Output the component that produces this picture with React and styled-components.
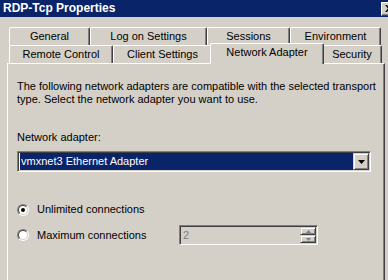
import React from 'react';
import styled, { createGlobalStyle } from 'styled-components';

const Global = createGlobalStyle`
  html, body { margin: 0; padding: 0; background: #D4D0C8; overflow: hidden; }
  body { font-family: "Liberation Sans", Arial, sans-serif; font-size: 11px; color: #000; }
`;

const Window = styled.div`
  width: 400px;
  height: 280px;
  background: #D4D0C8;
  display: flex;
  flex-direction: column;
  overflow: hidden;
`;

const TitleBar = styled.div`
  height: 17px;
  flex-shrink: 0;
  background: #0A246A;
  display: flex;
  align-items: center;
  justify-content: space-between;
  padding-left: 3px;
`;

const Title = styled.span`
  color: #fff;
  font-weight: bold;
  font-size: 12px;
  line-height: 17px;
  white-space: nowrap;
`;

const CloseButton = styled.div`
  box-sizing: border-box;
  width: 16px;
  height: 14px;
  margin-right: 3px;
  background: #D4D0C8;
  border: 1px solid;
  border-color: #fff #404040 #404040 #fff;
  box-shadow: inset -1px -1px #808080;
  display: flex;
  align-items: center;
  justify-content: center;
`;

const Body = styled.div`
  padding: 10px 0 0 7px;
  display: flex;
  flex-direction: column;
`;

const Tabs = styled.div`
  display: flex;
  flex-direction: column;
  padding-left: 2px;
`;

const TabRow = styled.div`
  display: flex;
  align-items: flex-start;
  height: 18px;
`;

const Tab = styled.div`
  box-sizing: border-box;
  flex-shrink: 0;
  width: ${(p) => (p.$active ? p.$w + 4 : p.$w)}px;
  height: ${(p) => (p.$active ? 21 : 18)}px;
  margin: ${(p) => (p.$active ? '-2px -2px -1px -2px' : '0')};
  position: relative;
  z-index: ${(p) => (p.$active ? 2 : 0)};
  background: #D4D0C8;
  border-top: 1px solid #fff;
  border-left: 1px solid #fff;
  border-right: 1px solid #404040;
  border-top-left-radius: 2px;
  border-top-right-radius: 2px;
  box-shadow: inset -1px 0 #808080;
  text-align: center;
  line-height: 17px;
  white-space: nowrap;
`;

const Panel = styled.div`
  box-sizing: border-box;
  width: 378px;
  height: 300px;
  border-top: 1px solid #fff;
  border-left: 1px solid #fff;
  border-right: 1px solid #404040;
  box-shadow: inset -1px 0 #808080;
  padding: 16px 0 0 9px;
  display: flex;
  flex-direction: column;
  align-items: flex-start;
`;

const Intro = styled.p`
  margin: 0;
  line-height: 13px;
  white-space: nowrap;
`;

const Line = styled.span`
  display: block;
`;

const FieldLabel = styled.div`
  margin-top: 25px;
  line-height: 13px;
`;

const Combo = styled.div`
  box-sizing: border-box;
  margin-top: 7px;
  width: 354px;
  height: 21px;
  border: 1px solid;
  border-color: #808080 #fff #fff #808080;
  box-shadow: inset 1px 1px #404040, inset -1px -1px #D4D0C8;
  padding: 1px;
  display: flex;
  background: #fff;
`;

const ComboValue = styled.div`
  flex: 1;
  background: #0A246A;
  color: #fff;
  line-height: 17px;
  padding-left: 2px;
  white-space: nowrap;
  box-shadow: inset 1px 0 #fff;
`;

const RaisedButton = styled.div`
  box-sizing: border-box;
  width: 16px;
  height: ${(p) => p.$h}px;
  background: #D4D0C8;
  border: 1px solid;
  border-color: #D4D0C8 #404040 #404040 #D4D0C8;
  box-shadow: inset 1px 1px #fff, inset -1px -1px #808080;
  display: flex;
  align-items: center;
  justify-content: center;
`;

const Options = styled.div`
  margin-top: 31px;
  display: grid;
  grid-template-columns: 162px auto;
  row-gap: 9px;
  align-items: center;
`;

const Option = styled.label`
  display: flex;
  align-items: center;
  gap: 8px;
  line-height: 13px;
  white-space: nowrap;
`;

const Radio = styled.span`
  box-sizing: border-box;
  width: 12px;
  height: 12px;
  border-radius: 50%;
  border: 1px solid;
  border-color: #808080 #fff #fff #808080;
  display: flex;
  flex-shrink: 0;
`;

const RadioInner = styled.span`
  box-sizing: border-box;
  flex: 1;
  border-radius: 50%;
  border: 1px solid;
  border-color: #404040 #D4D0C8 #D4D0C8 #404040;
  background: #fff;
  display: flex;
  align-items: center;
  justify-content: center;
`;

const Dot = styled.span`
  width: 4px;
  height: 4px;
  border-radius: 50%;
  background: #000;
`;

const Spin = styled.div`
  box-sizing: border-box;
  width: 139px;
  height: 20px;
  border: 1px solid;
  border-color: #808080 #fff #fff #808080;
  box-shadow: inset 1px 1px #404040, inset -1px -1px #D4D0C8;
  padding: 1px;
  display: flex;
`;

const SpinValue = styled.div`
  flex: 1;
  color: #808080;
  line-height: 16px;
  padding-left: 2px;
`;

const SpinButtons = styled.div`
  display: flex;
  flex-direction: column;
`;

const tabsTop = [
  ['General', 81],
  ['Log on Settings', 117],
  ['Sessions', 83],
  ['Environment', 91],
];

const tabsBottom = [
  ['Remote Control', 104],
  ['Client Settings', 99],
  ['Network Adapter', 110, true],
  ['Security', 60],
];

function RadioButton({ checked }) {
  return (
    <Radio>
      <RadioInner>{checked && <Dot />}</RadioInner>
    </Radio>
  );
}

export default function App() {
  return (
    <>
      <Global />
      <Window>
        <TitleBar>
          <Title>RDP-Tcp Properties</Title>
          <CloseButton>
            <svg width="8" height="7" viewBox="0 0 8 7">
              <path d="M0 0h2l2 2.5L6 0h2L5 3.5 8 7H6L4 4.5 2 7H0l3-3.5z" fill="#000" />
            </svg>
          </CloseButton>
        </TitleBar>
        <Body>
          <Tabs>
            <TabRow>
              {tabsTop.map(([t, w]) => (
                <Tab key={t} $w={w}>{t}</Tab>
              ))}
            </TabRow>
            <TabRow>
              {tabsBottom.map(([t, w, a]) => (
                <Tab key={t} $w={w} $active={a}>{t}</Tab>
              ))}
            </TabRow>
          </Tabs>
          <Panel>
            <Intro>
              <Line>The following network adapters are compatible with the selected transport</Line>
              <Line>type. Select the network adapter you want to use.</Line>
            </Intro>
            <FieldLabel>Network adapter:</FieldLabel>
            <Combo>
              <ComboValue>vmxnet3 Ethernet Adapter</ComboValue>
              <RaisedButton $h={17}>
                <svg width="7" height="4" viewBox="0 0 7 4">
                  <path d="M0 0h7L3.5 4z" fill="#000" />
                </svg>
              </RaisedButton>
            </Combo>
            <Options>
              <Option>
                <RadioButton checked />
                Unlimited connections
              </Option>
              <span />
              <Option>
                <RadioButton />
                Maximum connections
              </Option>
              <Spin>
                <SpinValue>2</SpinValue>
                <SpinButtons>
                  <RaisedButton $h={8}>
                    <svg width="5" height="3" viewBox="0 0 5 3">
                      <path d="M2.5 0L5 3H0z" fill="#808080" />
                    </svg>
                  </RaisedButton>
                  <RaisedButton $h={8}>
                    <svg width="5" height="3" viewBox="0 0 5 3">
                      <path d="M0 0h5L2.5 3z" fill="#808080" />
                    </svg>
                  </RaisedButton>
                </SpinButtons>
              </Spin>
            </Options>
          </Panel>
        </Body>
      </Window>
    </>
  );
}
